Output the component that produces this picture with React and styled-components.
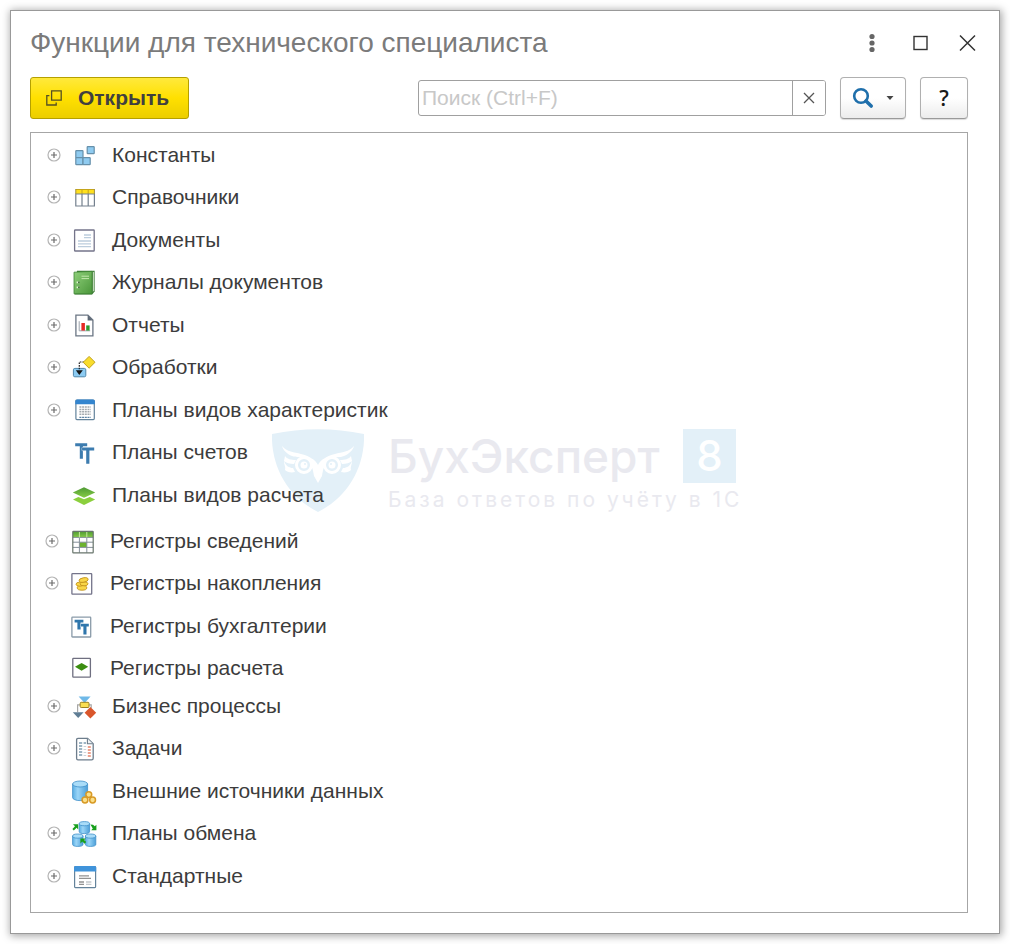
import React from "react";
import styled, { createGlobalStyle } from "styled-components";

const GlobalStyle = createGlobalStyle`
  *, *::before, *::after { box-sizing: border-box; }
  body {
    margin: 0;
    background: #fff;
    color: #3c3c3c;
    font-family: "Liberation Sans", Arial, sans-serif;
  }
  button, input { font-family: inherit; }
`;

const Page = styled.div`
  padding: 10px;
`;

const Window = styled.main`
  padding: 0 31px 20px 19px;
  border: 1px solid #999;
  background: #fff;
  box-shadow: 1px 1px 8px 1px rgba(0, 0, 0, 0.35);
`;

const TitleBar = styled.header`
  display: flex;
  align-items: center;
  justify-content: space-between;
  height: 64px;
  margin-bottom: 2px;
`;

const Title = styled.h1`
  margin: 0;
  color: #7b7b7b;
  font-size: 28px;
  font-weight: 400;
  line-height: 36px;
`;

const WindowControls = styled.div`
  display: flex;
  gap: 24px;
`;

const ControlButton = styled.button`
  display: flex;
  align-items: center;
  justify-content: center;
  width: 24px;
  height: 24px;
  padding: 0;
  border: 0;
  background: none;
  cursor: pointer;
  &:last-child { margin-right: -12px; }
`;

const Toolbar = styled.div`
  display: flex;
  align-items: center;
  gap: 14px;
  height: 42px;
  margin-bottom: 13px;
`;

const OpenButton = styled.button`
  display: flex;
  align-items: center;
  gap: 16px;
  height: 42px;
  margin-right: auto;
  padding: 0 19px 0 15px;
  border: 1px solid #b5a000;
  border-radius: 3px;
  background: linear-gradient(#ffe93c, #ffe000 50%, #ecce00);
  color: #404040;
  font-size: 21px;
  font-weight: 700;
  line-height: 24px;
  cursor: pointer;
`;

const SearchBox = styled.div`
  display: flex;
  flex: 0 1 408px;
  min-width: 0;
  height: 36px;
  border: 1px solid #a0a0a0;
  border-radius: 3px;
  background: #fff;
  overflow: hidden;
`;

const SearchInput = styled.input`
  flex: 1;
  min-width: 0;
  padding: 0 3px;
  border: 0;
  outline: 0;
  background: none;
  color: #3c3c3c;
  font-size: 21px;
  &::placeholder { color: #c8c8c8; opacity: 1; }
`;

const ClearButton = styled.button`
  display: flex;
  align-items: center;
  justify-content: center;
  width: 33px;
  padding: 0;
  border: 0;
  border-left: 1px solid #a0a0a0;
  background: #fff;
  cursor: pointer;
`;

const ToolButton = styled.button`
  display: flex;
  align-items: center;
  justify-content: center;
  gap: 12px;
  width: ${({ $wide }) => ($wide ? "66px" : "48px")};
  height: 42px;
  padding: 0;
  border: 1px solid #b0b0b0;
  border-bottom-color: #999;
  border-radius: 4px;
  background: linear-gradient(#fff 50%, #ececec);
  box-shadow: 0 1px 1px rgba(0, 0, 0, 0.15);
  color: #1a1a1a;
  font-family: "Open Sans", sans-serif;
  font-size: 21px;
  font-weight: 600;
  cursor: pointer;
`;

const Panel = styled.section`
  position: relative;
  padding-bottom: 15px;
  border: 1px solid #a6a6a6;
`;

const Watermark = styled.div`
  position: absolute;
  top: 296px;
  left: 0;
  right: 0;
  display: flex;
  justify-content: center;
  gap: 24px;
  padding-left: 10px;
  pointer-events: none;
`;

const Brand = styled.div`
  color: #e9e9ef;
`;

const BrandName = styled.div`
  display: flex;
  align-items: center;
  justify-content: space-between;
  height: 54px;
  font-family: Inter, "Open Sans", sans-serif;
  font-size: 46px;
  font-weight: 500;
  line-height: 54px;
`;

const BrandBadge = styled.span`
  width: 53px;
  background: #e3f0f8;
  color: #fff;
  font-size: 42px;
  text-align: center;
`;

const BrandTagline = styled.div`
  width: 348px;
  font-family: Inter, "Open Sans", sans-serif;
  font-size: 21px;
  letter-spacing: 3px;
  line-height: 34px;
  white-space: nowrap;
`;

const Group = styled.ul`
  position: relative;
  margin: ${({ $top }) => $top || 0}px 0 0;
  padding: 0 0 0 ${({ $indent }) => $indent}px;
  list-style: none;
`;

const Row = styled.li`
  display: grid;
  grid-template-columns: 14px 24px auto;
  justify-content: start;
  align-items: center;
  column-gap: 11px;
  height: 43px;
  &:nth-child(even) { height: 42px; }
`;

const Expander = styled.button`
  display: block;
  grid-column: 1;
  width: 14px;
  height: 14px;
  padding: 0;
  border: 0;
  background: none;
  cursor: pointer;
`;

const RowIcon = styled.svg`
  grid-column: 2;
  width: 24px;
  height: 24px;
  overflow: visible;
`;

const RowLabel = styled.span`
  grid-column: 3;
  padding-left: 5px;
  font-size: 21px;
  line-height: 24px;
  white-space: nowrap;
`;

const Cylinder = ({ x, y, w, h }) => {
  const r = w / 2;
  const e = w / 5;
  return (
    <g stroke="#3f8fc9" strokeWidth="0.8">
      <path
        d={`M${x} ${y + e}v${h - 2 * e}a${r} ${e} 0 0 0 ${w} 0v${-(h - 2 * e)}z`}
        fill="url(#cyl)"
      />
      <ellipse cx={x + r} cy={y + e} rx={r} ry={e} fill="#a9dcf8" />
    </g>
  );
};

const icons = {
  constants: (
    <g fill="#8fcbf0" stroke="#6690aa" strokeWidth="1.2">
      <rect x="15.2" y="3.6" width="7" height="7" rx="0.6" />
      <rect x="3.8" y="7.6" width="7.2" height="7" rx="0.6" />
      <rect x="3.8" y="14.6" width="7.2" height="7" rx="0.6" />
      <rect x="11" y="14.6" width="7.2" height="7" rx="0.6" />
    </g>
  ),
  catalogs: (
    <g>
      <rect x="3.8" y="4.5" width="18.6" height="16.6" fill="#fff" />
      <rect x="3.8" y="4.5" width="18.6" height="4.5" fill="#ffe01e" />
      <path d="M10 4.5v4.5M16.2 4.5v4.5M3.8 4.5h18.6" stroke="#c5a51c" />
      <path d="M3.8 9v12h18.6V9zM10 9v12M16.2 9v12" fill="none" stroke="#74808e" strokeWidth="1.2" />
      <path d="M3.8 4v5M22.4 4v5" stroke="#a28f3a" />
    </g>
  ),
  documents: (
    <g>
      <rect x="2.6" y="2" width="19.6" height="21" rx="0.6" fill="#fff" stroke="#74748a" strokeWidth="1.3" />
      <path d="M12 7h7M12 9.7h7M6 13h13M6 15.8h13M6 18.6h13" stroke="#bccddd" strokeWidth="1.3" />
    </g>
  ),
  journals: (
    <g>
      <path d="M5 .8h17.6v20.6l-2.4 3H2.6z" fill="#3d7d37" />
      <path d="M20.8 1.6l1 .6v18.4l-1 1.6z" fill="#e4f0dc" />
      <path d="M2 2.2l18-.8v22.4H2z" fill="url(#book)" stroke="#3f8535" strokeWidth="0.8" />
      <path d="M9.5 6.2h7.5M9.5 8.6h7.5" stroke="#c4e8ae" strokeWidth="1" />
      <path d="M4.6 12.4h3M4.6 17.4h3" stroke="#e2f5d5" strokeWidth="1.6" />
      <path d="M6.2 12.4h1.4M6.2 17.4h1.4" stroke="#24581f" strokeWidth="1.6" />
    </g>
  ),
  reports: (
    <g>
      <path d="M3.9 2.1h12l5 5v15.8h-17z" fill="#fff" stroke="#6b7684" strokeWidth="1.3" />
      <path d="M15.6 2v5.4h5.4z" fill="#5d6875" />
      <path d="M7.2 8.2v9.6h11" fill="none" stroke="#9ba3ac" />
      <rect x="9.4" y="10" width="3.5" height="7.6" fill="#e52a25" />
      <rect x="14.2" y="12.4" width="3.4" height="5.2" fill="#2f9a2f" />
    </g>
  ),
  processing: (
    <g>
      <rect x="1.4" y="13.4" width="12.4" height="8.4" rx="1.4" fill="#8ccbf2" stroke="#4f86aa" />
      <path d="M12 7H7.3v8" fill="none" stroke="#222" strokeWidth="1.2" strokeDasharray="1.6 1" />
      <path d="M3.8 15.2h7L7.3 20z" fill="#151515" />
      <path d="M17.1 1.4l5.9 5.9-5.9 5.9-5.9-5.9z" fill="#f8dc2c" stroke="#c0a21c" />
    </g>
  ),
  characteristics: (
    <g>
      <rect x="3.9" y="2" width="18.4" height="19.6" rx="1" fill="#fff" stroke="#63839c" strokeWidth="1.2" />
      <path d="M3.3 6.3V3.4q0-2 2-2h15.6q2 0 2 2v2.9z" fill="#3385cf" />
      <path d="M7.4 9h11.4M7.4 11.4h11.4M7.4 13.8h11.4M7.4 16.2h11.4" stroke="#a3a9ae" strokeWidth="1.5" strokeDasharray="2 .7" />
      <path d="M7.4 19.4h11.4" stroke="#5b82a4" strokeWidth="1.2" strokeDasharray="2 .7" />
    </g>
  ),
  accounts: (
    <g fill="#3d7caf">
      <path d="M3.2 3.2h12v3h-4.3v12.6H7.8V6.2H3.2z" />
      <path d="M10.1 7.6h12.1v3h-4.8v13.2h-3.2V10.6h-4.1z" stroke="#fff" strokeWidth="0.7" paintOrder="stroke" />
    </g>
  ),
  calculations: (
    <g>
      <path d="M1 16.4l5.4-2.5L12 16.2l5.8-2.3 5.4 2.5L12 21.9z" fill="#8bcf3d" />
      <path d="M12 4.3l11.2 5.2L12 14.7.8 9.5z" fill="url(#leaf)" />
    </g>
  ),
  infoRegister: (
    <g>
      <rect x="2.8" y="2.4" width="20.4" height="21.4" fill="#fff" />
      <rect x="2.8" y="2.4" width="20.4" height="6" fill="url(#leaf)" />
      <rect x="9.4" y="13.2" width="7.4" height="5" fill="#6cb32e" />
      <path d="M2.8 8.4h20.4M2.8 13.2h20.4M2.8 18.4h20.4M9.4 8.4v15.4M16.8 8.4v15.4" stroke="#85909a" />
      <path d="M9.4 2.4v6M16.8 2.4v6" stroke="#c8eaa0" />
      <rect x="2.8" y="2.4" width="20.4" height="21.4" rx="0.6" fill="none" stroke="#68756c" strokeWidth="1.2" />
    </g>
  ),
  accumulation: (
    <g>
      <rect x="1.9" y="2.6" width="19.8" height="20.6" rx="0.6" fill="#fff" stroke="#74748a" strokeWidth="1.3" />
      <g fill="#f9d648" stroke="#c4941c" strokeWidth="0.9">
        <ellipse cx="12" cy="16.8" rx="4.8" ry="2.4" />
        <ellipse cx="9.8" cy="13.2" rx="3.8" ry="2" />
        <ellipse cx="14" cy="12.8" rx="4" ry="2" />
        <ellipse cx="13.6" cy="9" rx="4.6" ry="2.2" transform="rotate(-10 13.6 9)" />
      </g>
    </g>
  ),
  accounting: (
    <g>
      <rect x="1.9" y="3.2" width="18.8" height="19.8" rx="0.6" fill="#fff" stroke="#8a9ba9" strokeWidth="1.3" />
      <path d="M4.6 5.8h8.8v2.8h-2.8v7H7.4v-7H4.6z" fill="#2f76ac" />
      <path d="M10.6 9.8h8.2v2.8h-2.3v8h-3.1v-8h-2.8z" fill="#2f76ac" stroke="#fff" strokeWidth="0.7" paintOrder="stroke" />
    </g>
  ),
  calcRegister: (
    <g>
      <rect x="2.8" y="2.3" width="17.6" height="18.8" rx="0.6" fill="#fff" stroke="#6f6f80" strokeWidth="1.3" />
      <path d="M11.6 7l6.6 3.7-6.6 4-6.6-4z" fill="#3b8d10" />
    </g>
  ),
  business: (
    <g>
      <path d="M8 10.8H5.6V18M17 10.8h2.2V14" fill="none" stroke="#a7a7a7" strokeWidth="1.2" />
      <path d="M6.6 2.6h12L12.6 9z" fill="#6fb9e8" />
      <rect x="8.2" y="8.3" width="8.8" height="5.2" rx="1" fill="#f9de52" stroke="#9c8120" />
      <path d="M.8 18.2h10.8L6.2 24z" fill="#5f7d94" />
      <path d="M18.4 13l5.8 5.7-5.8 5.8-5.8-5.8z" fill="#d9562b" />
    </g>
  ),
  tasks: (
    <g>
      <path d="M6 2.4h9.6l5.6 5.4v14.4q0 1.6-1.6 1.6H6q-1.4 0-1.4-1.6V4Q4.6 2.4 6 2.4z" fill="#fff" stroke="#6d7d8c" strokeWidth="1.3" />
      <path d="M15.4 2.6v5.2h5.4" fill="#eef2f5" stroke="#6d7d8c" strokeWidth="1.1" />
      <path d="M7 7h3.2M7 10h3.2M7 13h3.2M7 16h3.2M7 19h3.2M11.6 7h2.4" stroke="#7f9db3" strokeWidth="1.4" />
      <path d="M11.6 10.5h2.6M11.6 13.5h2.6M11.6 16.5h2.6M11.6 19.5h2.6" stroke="#ccd3d8" strokeWidth="1.2" />
      <path d="M15.8 11h3M15.8 14h3M15.8 17h3M15.8 20h3" stroke="#e8836a" strokeWidth="1.5" />
    </g>
  ),
  external: (
    <g>
      <Cylinder x={0.6} y={2} w={15} h={19.6} />
      <g fill="#fbe08a" stroke="#d89a26" strokeWidth="1.5">
        <circle cx="16.8" cy="15.6" r="2.9" />
        <circle cx="13" cy="21" r="2.9" />
        <circle cx="20.6" cy="21" r="2.9" />
      </g>
    </g>
  ),
  exchange: (
    <g>
      <Cylinder x={7.2} y={0.6} w={10.4} h={12} />
      <Cylinder x={0.6} y={13} w={10.4} h={12.4} />
      <Cylinder x={13.4} y={13} w={10.4} h={12.4} />
      <g fill="#18a01c">
        <path d="M1 3.2h5.2v5.2L4.6 6.8 1.8 9.4.4 8l2.6-2.8z" />
        <path d="M18.4 3.4l2.6.4 1.8 1.4 1.6-1.4v5.4h-5.2l1.6-1.6z" />
        <path d="M8.4 17.4h5.4l-1.6 1.6 2 2-1.6 1.8-2.2-2.2-2 1.8z" />
      </g>
    </g>
  ),
  standard: (
    <g>
      <rect x="2.6" y="2.6" width="21" height="21" rx="0.8" fill="#fff" stroke="#64839b" strokeWidth="1.2" />
      <path d="M2 7.4V3.6q0-1.6 1.6-1.6h19q1.6 0 1.6 1.6v3.8z" fill="#3f93da" />
      <path d="M7 11.8h10M7 14.4h12M7 18h5M7 20.4h5" stroke="#929292" strokeWidth="1.3" />
      <path d="M14 18h5.4M14 20.4h5.4" stroke="#c4c8cb" strokeWidth="1.3" />
    </g>
  ),
};

const groups = [
  {
    indent: 16,
    rows: [
      ["constants", "Константы", true],
      ["catalogs", "Справочники", true],
      ["documents", "Документы", true],
      ["journals", "Журналы документов", true],
      ["reports", "Отчеты", true],
      ["processing", "Обработки", true],
      ["characteristics", "Планы видов характеристик", true],
      ["accounts", "Планы счетов", false],
      ["calculations", "Планы видов расчета", false],
    ],
  },
  {
    indent: 14,
    top: 3,
    rows: [
      ["infoRegister", "Регистры сведений", true],
      ["accumulation", "Регистры накопления", true],
      ["accounting", "Регистры бухгалтерии", false],
      ["calcRegister", "Регистры расчета", false],
    ],
  },
  {
    indent: 16,
    top: -5,
    rows: [
      ["business", "Бизнес процессы", true],
      ["tasks", "Задачи", true],
      ["external", "Внешние источники данных", false],
      ["exchange", "Планы обмена", true],
      ["standard", "Стандартные", true],
    ],
  },
];

const HiddenDefs = styled.svg`
  display: block;
`;

const ExpanderGlyph = styled.svg`
  display: block;
`;

const Gradients = () => (
  <HiddenDefs width="0" height="0" aria-hidden="true">
    <defs>
      <linearGradient id="cyl">
        <stop offset="0" stopColor="#5aaee4" />
        <stop offset="0.35" stopColor="#9ad5f7" />
        <stop offset="1" stopColor="#4c9fd8" />
      </linearGradient>
      <linearGradient id="book" x2="1" y2="1">
        <stop offset="0" stopColor="#8fd07a" />
        <stop offset="1" stopColor="#4a963a" />
      </linearGradient>
      <linearGradient id="leaf" x2="0" y2="1">
        <stop offset="0" stopColor="#4f9a35" />
        <stop offset="1" stopColor="#86cc45" />
      </linearGradient>
    </defs>
  </HiddenDefs>
);

const OwlWing = () => (
  <g>
    <path
      d="M10 17C15 23 22 23 29 25 37 27 44 31 46 36V54L42 47C41 41 40 35 35 31 30 27 24 29 20 27 15 25 11 21 10 17z"
      fill="#fff"
    />
    <path
      d="M13 27C15 30 19 31 24 31L22 35C18 35 14 34 12 32 14 37 17 39 21 39L23 43C19 44 15 43 13 41 14 38 12 36 12 32z"
      fill="#fff"
    />
    <circle cx="32" cy="36" r="7.500" fill="#e3f0f8" stroke="#fff" strokeWidth="3" />
    <circle cx="32" cy="36" r="3.500" fill="#fff" />
    <circle cx="33" cy="35" r="1" fill="#e3f0f8" />
  </g>
);

const OwlShield = () => (
  <svg width="92" height="84" viewBox="0 0 92 84" aria-hidden="true">
    <path d="M0 5Q46-4.500 92 5C93 38 76 68 46 83 16 68-1 38 0 5z" fill="#e3f0f8" />
    <OwlWing />
    <g transform="translate(92 0) scale(-1 1)">
      <OwlWing />
    </g>
  </svg>
);

export default function App() {
  return (
    <Page>
      <GlobalStyle />
      <Gradients />
      <Window>
        <TitleBar>
          <Title>Функции для технического специалиста</Title>
          <WindowControls>
            <ControlButton aria-label="Меню">
              <svg width="24" height="24" viewBox="0 0 24 24" fill="#666">
                <circle cx="12" cy="5.500" r="2.600" />
                <circle cx="12" cy="12" r="2.600" />
                <circle cx="12" cy="18.500" r="2.600" />
              </svg>
            </ControlButton>
            <ControlButton aria-label="Развернуть">
              <svg width="24" height="24" viewBox="0 0 24 24" fill="none" stroke="#333" strokeWidth="1.4">
                <rect x="6" y="5.500" width="13" height="13" />
              </svg>
            </ControlButton>
            <ControlButton aria-label="Закрыть">
              <svg width="24" height="24" viewBox="0 0 24 24" fill="none" stroke="#333" strokeWidth="1.5">
                <path d="M4 4.500l15 15M19 4.500l-15 15" />
              </svg>
            </ControlButton>
          </WindowControls>
        </TitleBar>
        <Toolbar>
          <OpenButton>
            <svg width="16" height="16" viewBox="0 0 16 16" fill="none" stroke="#555023" strokeWidth="1.3">
              <path d="M5.600.8h9.600v9.400H5.600zM3.400 5.600H.8v9.400h9.400v-2.600" />
            </svg>
            Открыть
          </OpenButton>
          <SearchBox>
            <SearchInput type="text" placeholder="Поиск (Ctrl+F)" aria-label="Поиск" />
            <ClearButton aria-label="Очистить">
              <svg width="12" height="12" viewBox="0 0 12 12" stroke="#555" strokeWidth="1.3">
                <path d="M1 1l10 10M11 1L1 11" />
              </svg>
            </ClearButton>
          </SearchBox>
          <ToolButton $wide aria-label="Найти">
            <svg width="22" height="22" viewBox="0 0 22 22" fill="none" stroke="#1f6fab">
              <circle cx="9" cy="9" r="6.800" strokeWidth="2.600" />
              <path d="M14 14l5.200 5" strokeWidth="3.600" strokeLinecap="round" />
            </svg>
            <svg width="8" height="4" viewBox="0 0 8 4" fill="#444">
              <path d="M.5 0h7L4 4z" />
            </svg>
          </ToolButton>
          <ToolButton aria-label="Справка">?</ToolButton>
        </Toolbar>
        <Panel>
          <Watermark>
            <OwlShield />
            <Brand>
              <BrandName>
                БухЭксперт <BrandBadge>8</BrandBadge>
              </BrandName>
              <BrandTagline>База ответов по учёту в 1С</BrandTagline>
            </Brand>
          </Watermark>
          {groups.map((group, i) => (
            <Group key={i} $indent={group.indent} $top={group.top}>
              {group.rows.map(([icon, label, expandable]) => (
                <Row key={icon}>
                  {expandable && (
                    <Expander aria-label={`Развернуть: ${label}`}>
                      <ExpanderGlyph width="14" height="14" viewBox="0 0 14 14" fill="none">
                        <circle cx="7" cy="7" r="6" stroke="#b4b4b4" strokeWidth="1.2" />
                        <path d="M7 4v6M4 7h6" stroke="#6c6c6c" strokeWidth="1.2" />
                      </ExpanderGlyph>
                    </Expander>
                  )}
                  <RowIcon viewBox="0 0 24 24" aria-hidden="true">
                    {icons[icon]}
                  </RowIcon>
                  <RowLabel>{label}</RowLabel>
                </Row>
              ))}
            </Group>
          ))}
        </Panel>
      </Window>
    </Page>
  );
}
